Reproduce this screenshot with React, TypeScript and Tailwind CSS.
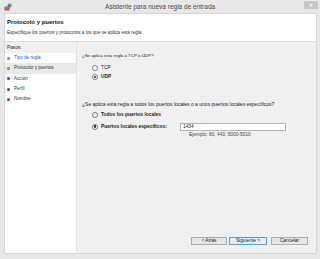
import React from 'react';

const font = { fontFamily: '"Liberation Sans", Arial, sans-serif' };

function Radio({ checked }: { checked?: boolean }) {
  return (
    <span className="w-[6px] h-[6px] rounded-full border border-[#7a7a7a] bg-white flex items-center justify-center shrink-0">
      {checked && <span className="w-[2.5px] h-[2.5px] rounded-full bg-[#222]" />}
    </span>
  );
}

function FirewallIcon() {
  return (
    <svg width="8" height="8" viewBox="0 0 16 16">
      <rect x="1" y="7" width="10" height="8" fill="#b23a2a" />
      <path d="M1 9.5h10M1 12.5h10M4 7v2.5M8 7v2.5M6 9.5v3M2.5 12.5V15M9 12.5V15" stroke="#e9b3a6" strokeWidth="0.8" />
      <circle cx="11" cy="5" r="4" fill="#2f7fd0" />
      <path d="M8.5 4c1 .6 2.5.2 3.2-.7.5 1.2 1.8 1.4 2.3.5" stroke="#7cc46b" strokeWidth="1.4" fill="none" />
    </svg>
  );
}

const steps = [
  { label: 'Tipo de regla', done: true, link: true },
  { label: 'Protocolo y puertos', done: true, current: true },
  { label: 'Acción' },
  { label: 'Perfil' },
  { label: 'Nombre' },
];

export default function App() {
  return (
    <div className="w-[320px] h-[259px] bg-[#e8e8e8] flex flex-col overflow-hidden" style={font}>
      {/* title bar */}
      <div className="h-[13px] flex items-center shrink-0">
        <div className="w-[18px] pl-[4px] flex items-center">
          <FirewallIcon />
        </div>
        <div className="flex-1 text-center text-[6.5px] leading-[13px] text-[#4a4a4a]">
          Asistente para nueva regla de entrada
        </div>
        <div className="w-[18px] flex justify-end self-start pt-[1px] pr-[2px]">
          <div className="w-[14px] h-[8px] bg-[#c6c6c6] flex items-center justify-center text-white text-[6px] leading-none font-bold">
            ×
          </div>
        </div>
      </div>

      <div className="flex-1 ml-[4px] mr-[3px] mb-[5px] flex flex-col border border-[#d6d6d6]">
        {/* header */}
        <div className="h-[28px] bg-white border-b border-[#dcdcdc] pl-[2px] shrink-0">
          <div className="h-[8px] mt-[4px] leading-[8px] text-[6px] font-bold text-[#111]">Protocolo y puertos</div>
          <div className="h-[6px] mt-[4px] leading-[6px] text-[4.6px] text-[#333]">
            Especifique los puertos y protocolos a los que se aplica esta regla.
          </div>
        </div>

        <div className="flex-1 flex">
          {/* steps */}
          <div className="w-[72px] bg-white border-r border-[#e2e2e2] flex flex-col">
            <div className="h-[11px] bg-[#f0f0f0] pl-[2px] leading-[11px] text-[4.8px] text-[#222]">Pasos:</div>
            {steps.map((s) => (
              <div
                key={s.label}
                className={`h-[10.4px] flex items-center pl-[2px] gap-[4px] ${s.current ? 'bg-[#e9e9e9]' : ''}`}
              >
                <span className={`w-[3px] h-[3px] rounded-full ${s.done ? 'bg-[#4cab3c]' : 'bg-[#4b3fb0]'}`} />
                <span className={`text-[4.6px] leading-none ${s.link ? 'text-[#1c5fc4]' : 'text-[#333]'}`}>{s.label}</span>
              </div>
            ))}
          </div>

          {/* content */}
          <div className="flex-1 bg-[#f0f0f0] flex flex-col pl-[5px] text-[#222]">
            <div className="mt-[10px] h-[8px] leading-[8px] text-[4.4px]">¿Se aplica esta regla a TCP o UDP?</div>
            <div className="mt-[4px] h-[8px] flex items-center gap-[3px] pl-[10px]">
              <Radio />
              <span className="text-[4.8px]">TCP</span>
            </div>
            <div className="mt-[1px] h-[8px] flex items-center gap-[3px] pl-[10px]">
              <Radio checked />
              <span className="text-[4.8px] font-bold">UDP</span>
            </div>

            <div className="mt-[19px] h-[8px] leading-[8px] text-[5px]">
              ¿Se aplica esta regla a todos los puertos locales o a unos puertos locales específicos?
            </div>
            <div className="mt-[3px] h-[8px] flex items-center gap-[3px] pl-[10px]">
              <Radio />
              <span className="text-[4.9px] font-bold">Todos los puertos locales</span>
            </div>
            <div className="mt-[3px] h-[9px] flex items-center pl-[10px]">
              <Radio checked />
              <span className="w-[82px] pl-[3px] text-[4.9px] font-bold">Puertos locales específicos:</span>
              <div className="w-[106px] h-[8px] bg-white border border-[#b5b5b5] flex items-center pl-[2px] text-[4.8px]">
                1434
              </div>
            </div>
            <div className="h-[7px] leading-[7px] pl-[107px] text-[4.8px] text-[#444]">Ejemplo: 80, 443, 5000-5010</div>

            <div className="mt-auto mb-[8px] flex justify-end pr-[8px]">
              <div className="w-[36px] h-[8px] bg-[#e6e6e6] border border-[#adadad] flex items-center justify-center text-[4.8px]">
                &lt; Atrás
              </div>
              <div className="ml-[2px] w-[38px] h-[8px] bg-[#e9eef4] border border-[#5b9bd9] flex items-center justify-center text-[4.8px]">
                Siguiente &gt;
              </div>
              <div className="ml-[4px] w-[37px] h-[8px] bg-[#e6e6e6] border border-[#adadad] flex items-center justify-center text-[4.8px]">
                Cancelar
              </div>
            </div>
          </div>
        </div>
      </div>
    </div>
  );
}
